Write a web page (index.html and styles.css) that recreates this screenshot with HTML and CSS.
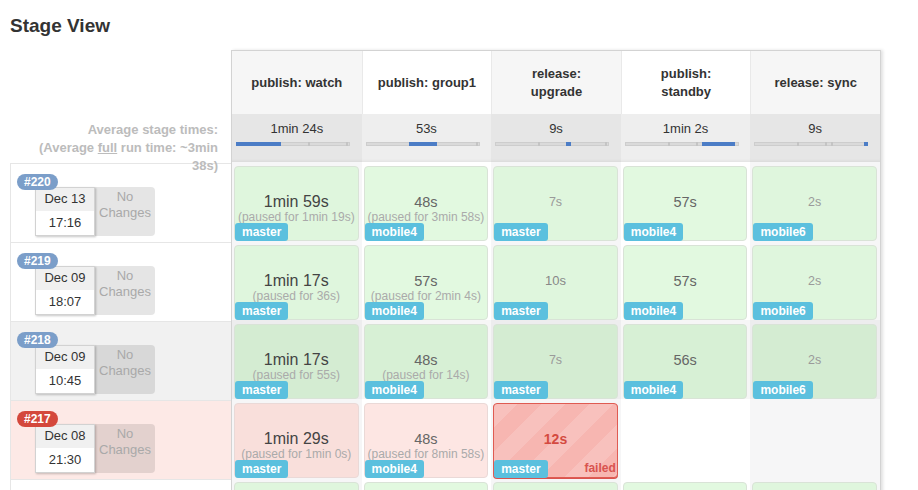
FILE: index.html
```html
<!DOCTYPE html>
<html>
<head>
<meta charset="utf-8">
<title>Stage View</title>
<link rel="stylesheet" href="styles.css">
</head>
<body>
<h2 class="title">Stage View</h2>
<div class="stage-view">
  <div class="runs">
    <div class="runs-head">
      <div class="avg-label">Average stage times:<br>(Average <a class="full">full</a> run time: ~3min 38s)</div>
    </div>
    <div class="run">
      <span class="build-no">#220</span>
      <div class="date"><div class="date-day">Dec 13</div><div class="date-time">17:16</div></div>
      <div class="changes">No Changes</div>
    </div>
    <div class="run">
      <span class="build-no">#219</span>
      <div class="date"><div class="date-day">Dec 09</div><div class="date-time">18:07</div></div>
      <div class="changes">No Changes</div>
    </div>
    <div class="run hl">
      <span class="build-no">#218</span>
      <div class="date"><div class="date-day">Dec 09</div><div class="date-time">10:45</div></div>
      <div class="changes">No Changes</div>
    </div>
    <div class="run failed">
      <span class="build-no">#217</span>
      <div class="date"><div class="date-day">Dec 08</div><div class="date-time">21:30</div></div>
      <div class="changes">No Changes</div>
    </div>
    <div class="run">
      <span class="build-no">#216</span>
      <div class="date"><div class="date-day">Dec 08</div><div class="date-time">12:07</div></div>
      <div class="changes">No Changes</div>
    </div>
  </div>

  <div class="stages">
    <div class="stage-head">
      <div>publish: watch</div>
      <div>publish: group1</div>
      <div>release: upgrade</div>
      <div>publish: standby</div>
      <div>release: sync</div>
    </div>
    <div class="avg-row">
      <div>
        <div class="avg-time">1min 24s</div>
        <div class="bar"><i class="tick" style="left:72px"></i><i class="tick" style="left:110px"></i><i class="fill" style="left:0;width:45px"></i></div>
      </div>
      <div>
        <div class="avg-time">53s</div>
        <div class="bar"><i class="tick" style="left:110px"></i><i class="fill" style="left:43px;width:28px"></i></div>
      </div>
      <div>
        <div class="avg-time">9s</div>
        <div class="bar"><i class="tick" style="left:43px"></i><i class="tick" style="left:110px"></i><i class="fill" style="left:71px;width:5px"></i></div>
      </div>
      <div>
        <div class="avg-time">1min 2s</div>
        <div class="bar"><i class="tick" style="left:43px"></i><i class="tick" style="left:71px"></i><i class="fill" style="left:77px;width:33px"></i></div>
      </div>
      <div>
        <div class="avg-time">9s</div>
        <div class="bar"><i class="tick" style="left:43px"></i><i class="tick" style="left:71px"></i><i class="tick" style="left:77px"></i><i class="fill" style="left:110px;width:4px"></i></div>
      </div>
    </div>

    <div class="stage-row">
      <div class="slot"><div class="cell"><div class="dur t-xl">1min 59s</div><div class="paused">(paused for 1min 19s)</div><span class="branch">master</span></div></div>
      <div class="slot"><div class="cell"><div class="dur t-l">48s</div><div class="paused">(paused for 3min 58s)</div><span class="branch">mobile4</span></div></div>
      <div class="slot"><div class="cell"><div class="dur t-s">7s</div><span class="branch">master</span></div></div>
      <div class="slot"><div class="cell"><div class="dur t-l">57s</div><span class="branch">mobile4</span></div></div>
      <div class="slot"><div class="cell"><div class="dur t-s">2s</div><span class="branch">mobile6</span></div></div>
    </div>
    <div class="stage-row">
      <div class="slot"><div class="cell"><div class="dur t-xl">1min 17s</div><div class="paused">(paused for 36s)</div><span class="branch">master</span></div></div>
      <div class="slot"><div class="cell"><div class="dur t-l">57s</div><div class="paused">(paused for 2min 4s)</div><span class="branch">mobile4</span></div></div>
      <div class="slot"><div class="cell"><div class="dur t-m">10s</div><span class="branch">master</span></div></div>
      <div class="slot"><div class="cell"><div class="dur t-l">57s</div><span class="branch">mobile4</span></div></div>
      <div class="slot"><div class="cell"><div class="dur t-s">2s</div><span class="branch">mobile6</span></div></div>
    </div>
    <div class="stage-row hl">
      <div class="slot"><div class="cell"><div class="dur t-xl">1min 17s</div><div class="paused">(paused for 55s)</div><span class="branch">master</span></div></div>
      <div class="slot"><div class="cell"><div class="dur t-l">48s</div><div class="paused">(paused for 14s)</div><span class="branch">mobile4</span></div></div>
      <div class="slot"><div class="cell"><div class="dur t-s">7s</div><span class="branch">master</span></div></div>
      <div class="slot"><div class="cell"><div class="dur t-l">56s</div><span class="branch">mobile4</span></div></div>
      <div class="slot"><div class="cell"><div class="dur t-s">2s</div><span class="branch">mobile6</span></div></div>
    </div>
    <div class="stage-row failrow">
      <div class="slot"><div class="cell"><div class="dur t-xl">1min 29s</div><div class="paused">(paused for 1min 0s)</div><span class="branch">master</span></div></div>
      <div class="slot"><div class="cell"><div class="dur t-l">48s</div><div class="paused">(paused for 8min 58s)</div><span class="branch">mobile4</span></div></div>
      <div class="slot"><div class="cell fail"><div class="dur">12s</div><span class="branch">master</span><span class="failed-label">failed</span></div></div>
      <div class="slot"></div>
      <div class="slot"></div>
    </div>
    <div class="stage-row">
      <div class="slot"><div class="cell"><div class="dur t-xl">1min 21s</div><span class="branch">master</span></div></div>
      <div class="slot"><div class="cell"><div class="dur t-l">50s</div><span class="branch">mobile4</span></div></div>
      <div class="slot"><div class="cell"><div class="dur t-s">8s</div><span class="branch">master</span></div></div>
      <div class="slot"><div class="cell"><div class="dur t-l">58s</div><span class="branch">mobile4</span></div></div>
      <div class="slot"><div class="cell"><div class="dur t-s">2s</div><span class="branch">mobile6</span></div></div>
    </div>
  </div>
</div>
</body>
</html>
```
FILE: styles.css
```css
* { box-sizing: border-box; }

body {
  margin: 0;
  padding: 0 10px;
  background: #fff;
  color: #333;
  font-family: "Liberation Sans", Arial, Helvetica, sans-serif;
}

.title {
  margin: 0 0 12px;
  padding-top: 14px;
  font-size: 19px;
  line-height: 24px;
  font-weight: bold;
  color: #333;
}

.stage-view {
  display: flex;
  align-items: flex-start;
}

/* ---------- left column (runs) ---------- */
.runs {
  width: 221px;
  flex: none;
}

.runs-head {
  position: relative;
  z-index: 3;
  height: 113px;
  padding: 71px 13px 0 0;
  display: flex;
  justify-content: flex-end;
}

.avg-label {
  width: 195px;
  height: 42px;
  text-align: right;
  font-size: 13px;
  line-height: 18px;
  font-weight: bold;
  color: #bcbcbc;
}

.avg-label .full {
  color: inherit;
  text-decoration: underline;
}

.run {
  position: relative;
  display: flex;
  height: 79px;
  padding: 23px 0 0 24px;
  border-top: 1px solid #e6e6e6;
  border-left: 1px solid #e6e6e6;
  background: #fff;
}

.run.hl { background: #f1f1f1; }
.run.failed { background: #fde9e6; }

.build-no {
  position: absolute;
  top: 10px;
  left: 6px;
  z-index: 2;
  height: 16px;
  padding: 0 7px;
  border-radius: 8px;
  background: #7b9ec9;
  color: #fff;
  font-size: 12px;
  font-weight: bold;
  line-height: 16px;
}

.run.failed .build-no { background: #d4483c; }

.date {
  position: relative;
  z-index: 1;
  width: 60px;
  height: 49px;
  border: 1px solid #d2d2d2;
  background: #fff;
  box-shadow: 1px 1px 2px rgba(0, 0, 0, 0.22);
  font-size: 13px;
  text-align: center;
  color: #333;
}

.date-day {
  height: 23px;
  line-height: 22px;
  background: #f0f0f0;
}

.date-time {
  line-height: 24px;
}

.changes {
  width: 60px;
  height: 49px;
  padding: 2px 4px 0;
  border-radius: 0 4px 4px 0;
  background: rgba(0, 0, 0, 0.1);
  color: #a9a9a9;
  font-size: 13px;
  line-height: 16px;
  text-align: center;
}

/* ---------- stage table ---------- */
.stages {
  width: 650px;
  flex: none;
  border: 1px solid #d3d3d3;
  border-bottom: none;
  box-shadow: 2px 0 3px rgba(0, 0, 0, 0.12);
}

.stage-head,
.avg-row,
.stage-row {
  display: grid;
  grid-template-columns: repeat(5, 1fr);
}

.stage-head { height: 63px; }

.stage-head > div {
  display: flex;
  align-items: center;
  justify-content: center;
  padding: 0 15px;
  text-align: center;
  font-size: 13px;
  font-weight: bold;
  line-height: 18px;
  color: #333;
  background: #fff;
}

.stage-head > div + div { border-left: 1px solid #e9e9e9; }
.stage-head > div:nth-child(odd) { background: #f6f6f6; }

.avg-row { height: 48px; }

.avg-row > div {
  padding-top: 7px;
  background: #eeeeee;
  box-shadow: inset 0 -3px 3px -2px rgba(0, 0, 0, 0.06);
}

.avg-row > div:nth-child(odd) { background: #e6e6e6; }

.avg-time {
  text-align: center;
  font-size: 13px;
  line-height: 16px;
  color: #333;
}

.bar {
  position: relative;
  width: 114px;
  height: 4px;
  margin: 5px 0 0 4px;
  background: #dadada;
  box-shadow: inset 0 0 0 1px rgba(0, 0, 0, 0.06);
}

.bar .tick {
  position: absolute;
  top: 0;
  width: 2px;
  height: 4px;
  background: #c4c4c4;
}

.bar .fill {
  position: absolute;
  top: 0;
  height: 4px;
  background: #4c7dc6;
}

.stage-row { height: 79px; }

.slot {
  padding: 4px 3px 0 2px;
  background: #fff;
}

.slot:nth-child(odd) { background: #f6f6f7; }

.stage-row.hl .slot { box-shadow: inset 0 0 0 200px rgba(0, 0, 0, 0.035); }

.cell {
  position: relative;
  height: 75px;
  padding-top: 26px;
  border: 1px solid #d9e3d7;
  border-radius: 4px;
  background: #e2f9e0;
  text-align: center;
}

.slot:nth-child(odd) .cell { background: #dff6dd; }

.stage-row.hl .cell { background: #d7f0d5; }
.stage-row.hl .slot:nth-child(odd) .cell { background: #d4ecd2; }

.stage-row.failrow .cell {
  border-color: #ead9d7;
  background: #fde6e3;
}
.stage-row.failrow .slot:nth-child(odd) .cell { background: #f9dfdb; }

.dur {
  line-height: 18px;
  white-space: nowrap;
}

.t-xl { font-size: 16px; color: #444; }
.t-l { font-size: 14.5px; color: #666; }
.t-m { font-size: 13px; color: #888; }
.t-s { font-size: 12.5px; color: #9a9a9a; }

.paused {
  font-size: 12px;
  line-height: 12px;
  color: #aaa;
  white-space: nowrap;
}

.branch {
  position: absolute;
  left: 0;
  bottom: -1px;
  height: 18px;
  padding: 0 7px;
  border-radius: 3px;
  background: #5bc0de;
  color: #fff;
  font-size: 12px;
  font-weight: bold;
  line-height: 18px;
}

.stage-row.failrow .slot .cell.fail {
  border-color: #df5b52;
  background-color: #f7b6b1;
  background-image: linear-gradient(135deg,
    rgba(255, 255, 255, 0.15) 25%, transparent 25%,
    transparent 50%, rgba(255, 255, 255, 0.15) 50%,
    rgba(255, 255, 255, 0.15) 75%, transparent 75%, transparent);
  background-size: 48px 48px;
  box-shadow: 0 1px 0 #d9534f;
}

.fail .dur {
  font-size: 14px;
  font-weight: bold;
  color: #d44a40;
}

.failed-label {
  position: absolute;
  right: 1px;
  bottom: 2px;
  font-size: 12px;
  font-weight: bold;
  line-height: 14px;
  color: #d9534f;
}
```
